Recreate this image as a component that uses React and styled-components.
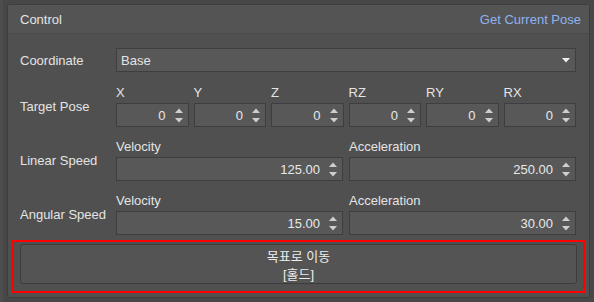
import styled, { createGlobalStyle } from 'styled-components';

const GlobalStyle = createGlobalStyle`
  html, body {
    margin: 0;
    padding: 0;
    background: #474747;
  }
  body {
    font-family: 'Liberation Sans', Arial, 'Noto Sans CJK KR', sans-serif;
    font-size: 13px;
    color: #e4e4e4;
  }
`;

const POSE_AXES = ['X', 'Y', 'Z', 'RZ', 'RY', 'RX'];

const SpinArrows = () => (
  <Arrows>
    <svg width="8" height="5" viewBox="0 0 8 5">
      <path d="M0 5 L4 0.5 L8 5 Z" fill="#cfcfcf" />
    </svg>
    <svg width="8" height="5" viewBox="0 0 8 5">
      <path d="M0 0 L4 4.5 L8 0 Z" fill="#cfcfcf" />
    </svg>
  </Arrows>
);

const SpinBox = ({ value }) => (
  <SpinFrame>
    <SpinValue>{value}</SpinValue>
    <SpinArrows />
  </SpinFrame>
);

const LabeledSpin = ({ label, value }) => (
  <FieldGroup>
    <FieldLabel>{label}</FieldLabel>
    <SpinBox value={value} />
  </FieldGroup>
);

const App = () => {
  return (
    <>
      <GlobalStyle />
      <Screen>
        <Panel>
          <Header>
            <span>Control</span>
            <Link>Get Current Pose</Link>
          </Header>
          <Body>
            <RowLabel>Coordinate</RowLabel>
            <Combo>
              <span>Base</span>
              <svg width="8" height="5" viewBox="0 0 8 5">
                <path d="M0 0 L8 0 L4 4.5 Z" fill="#f0f0f0" />
              </svg>
            </Combo>

            <RowLabel>Target Pose</RowLabel>
            <PoseGrid>
              {POSE_AXES.map(axis => (
                <LabeledSpin key={axis} label={axis} value="0" />
              ))}
            </PoseGrid>

            <RowLabel>Linear Speed</RowLabel>
            <SpeedGrid>
              <LabeledSpin label="Velocity" value="125.00" />
              <LabeledSpin label="Acceleration" value="250.00" />
            </SpeedGrid>

            <RowLabel>Angular Speed</RowLabel>
            <SpeedGrid>
              <LabeledSpin label="Velocity" value="15.00" />
              <LabeledSpin label="Acceleration" value="30.00" />
            </SpeedGrid>
          </Body>
          <Highlight>
            <MoveButton>
              <span>목표로 이동</span>
              <span>[홀드]</span>
            </MoveButton>
          </Highlight>
        </Panel>
      </Screen>
    </>
  );
};
export default App;

const Screen = styled.div`
  width: 594px;
  height: 302px;
  padding: 4px 4px 0 7px;
  box-sizing: border-box;
  background: #474747;
  border-left: 3px solid #4d4d4d;
`;

const Panel = styled.div`
  width: 583px;
  height: 294px;
  margin-left: -3px;
  box-sizing: border-box;
  border: 1px solid #3d3d3d;
  border-radius: 3px;
  background: #505050;
  display: flex;
  flex-direction: column;
`;

const Header = styled.div`
  height: 27px;
  display: flex;
  align-items: center;
  justify-content: space-between;
  padding: 1px 8px 0 12px;
  background: #545454;
  border-bottom: 1px solid #4a4a4a;
`;

const Link = styled.span`
  color: #8fb2f0;
`;

const Body = styled.div`
  display: grid;
  grid-template-columns: 96px 1fr;
  align-items: center;
  row-gap: 12px;
  padding: 14px 13px 0 12px;
`;

const RowLabel = styled.div`
  color: #e4e4e4;
  white-space: nowrap;
`;

const Combo = styled.div`
  height: 24px;
  box-sizing: border-box;
  display: flex;
  align-items: center;
  justify-content: space-between;
  padding: 0 5px 0 4px;
  background: #585858;
  border: 1px solid #3e3e3e;
  margin-bottom: 1px;
`;

const PoseGrid = styled.div`
  display: grid;
  grid-template-columns: repeat(6, 1fr);
  column-gap: 5px;
`;

const SpeedGrid = styled.div`
  display: grid;
  grid-template-columns: 1fr 1fr;
  column-gap: 6px;
`;

const FieldGroup = styled.div`
  display: flex;
  flex-direction: column;
`;

const FieldLabel = styled.div`
  height: 16px;
  line-height: 16px;
  margin-bottom: 2px;
  color: #e4e4e4;
`;

const SpinFrame = styled.div`
  height: 24px;
  box-sizing: border-box;
  display: flex;
  align-items: center;
  background: #585858;
  border: 1px solid #3e3e3e;
`;

const SpinValue = styled.span`
  flex: 1;
  text-align: right;
  padding-right: 6px;
  color: #e8e8e8;
`;

const Arrows = styled.div`
  width: 14px;
  display: flex;
  flex-direction: column;
  align-items: center;
  gap: 5px;
  margin-right: 2px;
`;

const Highlight = styled.div`
  margin: 5px 4px 0 4px;
  padding: 2px 6px 7px 6px;
  border: 2px solid #ff0000;
`;

const MoveButton = styled.div`
  height: 40px;
  box-sizing: border-box;
  display: flex;
  flex-direction: column;
  align-items: center;
  justify-content: center;
  padding-top: 3px;
  line-height: 18px;
  background: #545454;
  border: 1px solid #3c3c3c;
  border-radius: 3px;
  color: #ececec;
  font-family: 'Liberation Sans', 'Noto Sans CJK KR', sans-serif;
`;
